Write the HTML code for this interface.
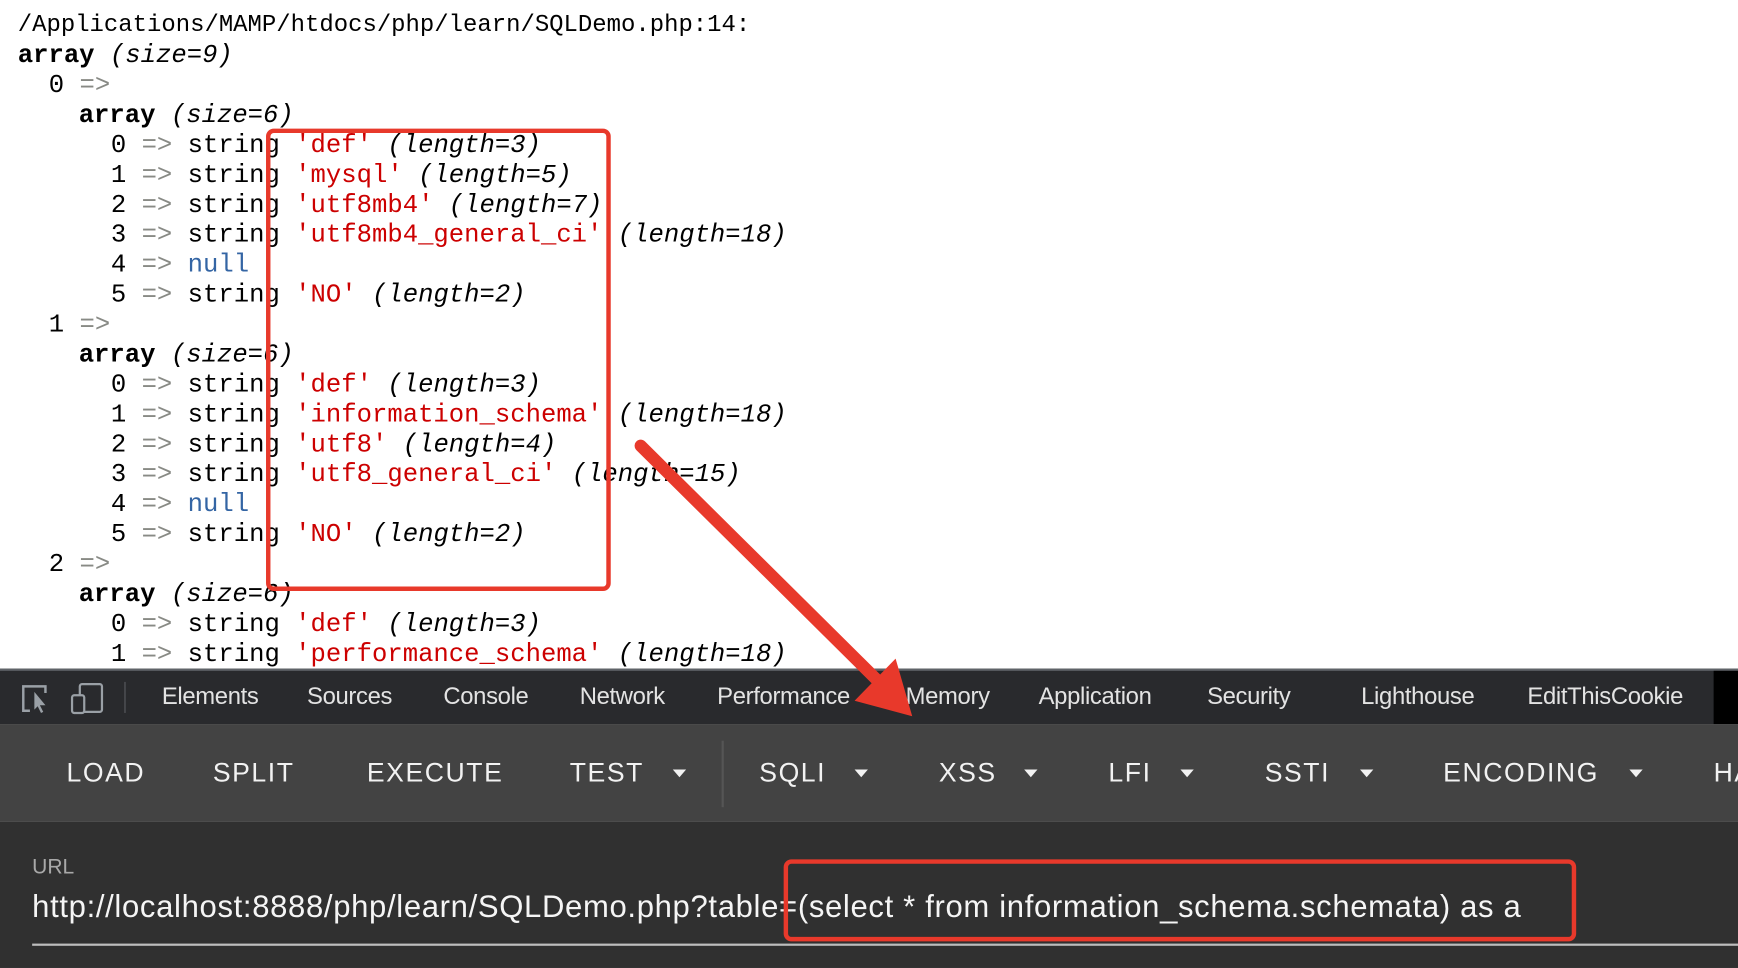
<!DOCTYPE html>
<html><head><meta charset="utf-8"><style>
html,body{margin:0;padding:0;background:#fff;overflow:hidden;width:1738px;height:968px}
#w{position:absolute;left:0;top:0;width:1568px;height:873px;transform:scale(1.10842,1.1088);transform-origin:0 0;background:#fff}
.l{position:absolute;font-family:"Liberation Mono",monospace;font-size:23.1px;white-space:pre;line-height:27px;color:#000}
.g{color:#888a85}.r{color:#cc0000}.b{color:#3465a4}.i{font-style:italic}.B{font-weight:bold}
.t{position:absolute;top:616px;font-family:"Liberation Sans",sans-serif;font-size:21.5px;color:#e3e3e3;letter-spacing:-0.3px}
.h{position:absolute;top:684px;font-family:"Liberation Sans",sans-serif;font-size:24px;color:#f2f2f2;letter-spacing:1.4px}
.a{position:absolute;top:694px;width:0;height:0;border-left:6px solid transparent;border-right:6px solid transparent;border-top:7px solid #f2f2f2}
</style></head><body><div id="w">
<div class="l" style="left:16px;top:10px;font-size:21.6px">/Applications/MAMP/htdocs/php/learn/SQLDemo.php:14:</div>
<div class="l" style="left:16px;top:37px"><span class="B">array</span> <span class="i">(size=9)</span></div>
<div class="l" style="left:44px;top:64px">0 <span class="g">=&gt;</span></div>
<div class="l" style="left:71px;top:91px"><span class="B">array</span> <span class="i">(size=6)</span></div>
<div class="l" style="left:100px;top:118px">0 <span class="g">=&gt;</span> string <span class="r">'def'</span> <span class="i">(length=3)</span></div>
<div class="l" style="left:100px;top:145px">1 <span class="g">=&gt;</span> string <span class="r">'mysql'</span> <span class="i">(length=5)</span></div>
<div class="l" style="left:100px;top:172px">2 <span class="g">=&gt;</span> string <span class="r">'utf8mb4'</span> <span class="i">(length=7)</span></div>
<div class="l" style="left:100px;top:199px">3 <span class="g">=&gt;</span> string <span class="r">'utf8mb4_general_ci'</span> <span class="i">(length=18)</span></div>
<div class="l" style="left:100px;top:226px">4 <span class="g">=&gt;</span> <span class="b">null</span></div>
<div class="l" style="left:100px;top:253px">5 <span class="g">=&gt;</span> string <span class="r">'NO'</span> <span class="i">(length=2)</span></div>
<div class="l" style="left:44px;top:280px">1 <span class="g">=&gt;</span></div>
<div class="l" style="left:71px;top:307px"><span class="B">array</span> <span class="i">(size=6)</span></div>
<div class="l" style="left:100px;top:334px">0 <span class="g">=&gt;</span> string <span class="r">'def'</span> <span class="i">(length=3)</span></div>
<div class="l" style="left:100px;top:361px">1 <span class="g">=&gt;</span> string <span class="r">'information_schema'</span> <span class="i">(length=18)</span></div>
<div class="l" style="left:100px;top:388px">2 <span class="g">=&gt;</span> string <span class="r">'utf8'</span> <span class="i">(length=4)</span></div>
<div class="l" style="left:100px;top:415px">3 <span class="g">=&gt;</span> string <span class="r">'utf8_general_ci'</span> <span class="i">(length=15)</span></div>
<div class="l" style="left:100px;top:442px">4 <span class="g">=&gt;</span> <span class="b">null</span></div>
<div class="l" style="left:100px;top:469px">5 <span class="g">=&gt;</span> string <span class="r">'NO'</span> <span class="i">(length=2)</span></div>
<div class="l" style="left:44px;top:496px">2 <span class="g">=&gt;</span></div>
<div class="l" style="left:71px;top:523px"><span class="B">array</span> <span class="i">(size=6)</span></div>
<div class="l" style="left:100px;top:550px">0 <span class="g">=&gt;</span> string <span class="r">'def'</span> <span class="i">(length=3)</span></div>
<div class="l" style="left:100px;top:577px">1 <span class="g">=&gt;</span> string <span class="r">'performance_schema'</span> <span class="i">(length=18)</span></div>

<div style="position:absolute;left:240px;top:116px;width:303px;height:409px;border:4px solid #e8392b;border-radius:7px"></div>

<div style="position:absolute;left:0;top:603px;width:1568px;height:50px;background:#292a2d;border-top:2px solid #5f6368;box-sizing:border-box"></div>
<svg style="position:absolute;left:0;top:603px" width="120" height="50">
<path d="M27 38 H21 V16 H41 V22" fill="none" stroke="#9aa0a6" stroke-width="2.2"/>
<path d="M31 21 L41 33 L36 33 L39 39 L37 40 L34 34 L31 37 Z" fill="#9aa0a6"/>
<rect x="72" y="14" width="20" height="25" rx="2" fill="none" stroke="#9aa0a6" stroke-width="2"/>
<rect x="65" y="24" width="11" height="16" rx="2" fill="#292a2d" stroke="#9aa0a6" stroke-width="2"/>
<rect x="112" y="12" width="1.5" height="28" fill="#4a4c50"/>
</svg>
<div class="t" style="left:146px">Elements</div>
<div class="t" style="left:277px">Sources</div>
<div class="t" style="left:400px">Console</div>
<div class="t" style="left:523px">Network</div>
<div class="t" style="left:647px">Performance</div>
<div class="t" style="left:817px">Memory</div>
<div class="t" style="left:937px">Application</div>
<div class="t" style="left:1089px">Security</div>
<div class="t" style="left:1228px">Lighthouse</div>
<div class="t" style="left:1378px">EditThisCookie</div>
<div style="position:absolute;left:1546px;top:605px;width:22px;height:48px;background:#000"></div>

<div style="position:absolute;left:0;top:653px;width:1568px;height:88px;background:#434343"></div>
<div class="h" style="left:60px">LOAD</div>
<div class="h" style="left:192px">SPLIT</div>
<div class="h" style="left:331px">EXECUTE</div>
<div class="h" style="left:514px">TEST</div><div class="a" style="left:607px"></div>
<div style="position:absolute;left:651px;top:668px;width:2px;height:60px;background:#555"></div>
<div class="h" style="left:685px">SQLI</div><div class="a" style="left:771px"></div>
<div class="h" style="left:847px">XSS</div><div class="a" style="left:924px"></div>
<div class="h" style="left:1000px">LFI</div><div class="a" style="left:1065px"></div>
<div class="h" style="left:1141px">SSTI</div><div class="a" style="left:1227px"></div>
<div class="h" style="left:1302px">ENCODING</div><div class="a" style="left:1470px"></div>
<div class="h" style="left:1546px">HA</div>

<div style="position:absolute;left:0;top:741px;width:1568px;height:132px;background:#303030"></div>
<div style="position:absolute;left:29px;top:772px;font-family:'Liberation Sans',sans-serif;font-size:19px;color:#a8a8a8">URL</div>
<div style="position:absolute;left:29px;top:802px;font-family:'Liberation Sans',sans-serif;font-size:28px;color:#f5f5f5;white-space:nowrap;letter-spacing:0.6px">http://localhost:8888/php/learn/SQLDemo.php?table=(select * from information_schema.schemata) as a</div>
<div style="position:absolute;left:29px;top:851px;width:1539px;height:2px;background:#bdbdbd"></div>
<div style="position:absolute;left:707px;top:775px;width:707px;height:66px;border:4px solid #e8392b;border-radius:7px"></div>

<svg style="position:absolute;left:0;top:0" width="1568" height="873">
<line x1="578" y1="402" x2="792" y2="614" stroke="#e8392b" stroke-width="11" stroke-linecap="round"/>
<polygon points="823,646 771,632 808,594" fill="#e8392b"/>
</svg>
</div></body></html>
